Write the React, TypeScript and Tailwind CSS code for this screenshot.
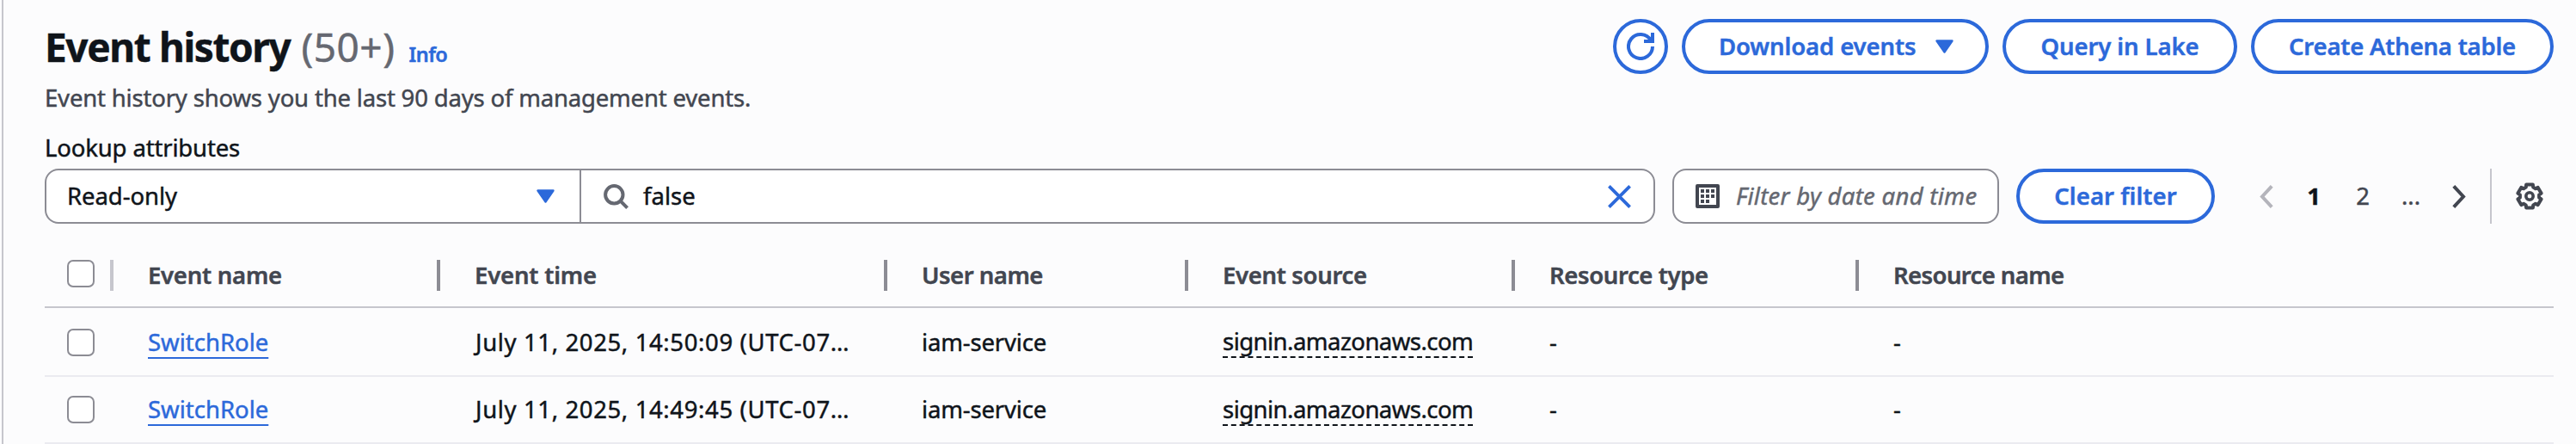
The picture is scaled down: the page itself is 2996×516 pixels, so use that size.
import type { ReactNode } from "react";

function Caret() {
  return (
    <svg width="21" height="16" viewBox="0 0 21 16" className="shrink-0 text-[#2c69da]">
      <path d="M1.5 1.5h18L10.5 14.5z" fill="currentColor" stroke="currentColor" strokeWidth="2.4" strokeLinejoin="round" />
    </svg>
  );
}

function RefreshIcon() {
  return (
    <svg width="32" height="32" viewBox="0 0 16 16" fill="none" stroke="currentColor" strokeWidth="2">
      <path d="M15 8a7 7 0 1 1-1-3.6" />
      <path d="M15 0v5h-5" />
    </svg>
  );
}

function SearchIcon() {
  return (
    <svg width="29" height="29" viewBox="0 0 29 29" fill="none" stroke="#656871" strokeWidth="4" className="shrink-0">
      <circle cx="12.3" cy="12.3" r="10.2" />
      <path d="M19.4 19.4l8.2 8.2" />
    </svg>
  );
}

function CloseIcon() {
  return (
    <svg width="27" height="27" viewBox="0 0 27 27" fill="none" stroke="#2c69da" strokeWidth="3.8" className="shrink-0">
      <path d="M1.4 1.4l24.2 24.2M25.6 1.4L1.4 25.6" />
    </svg>
  );
}

function CalendarIcon() {
  return (
    <svg width="28" height="28" viewBox="0 0 28 28" className="shrink-0">
      <rect x="2" y="2" width="24" height="24" fill="none" stroke="#424650" strokeWidth="4" strokeLinejoin="round" />
      <path d="M6 6h4v4H6zM12 6h4v4h-4zM18 6h4v4h-4zM6 12h4v4H6zM12 12h4v4h-4zM18 12h4v4h-4zM6 18h4v4H6zM12 18h4v4h-4z" fill="#424650" />
    </svg>
  );
}

function Chevron({ d, color }: { d: string; color: string }) {
  return (
    <svg width="16" height="27" viewBox="0 0 16 27" fill="none" stroke={color} strokeWidth="4" className="shrink-0">
      <path d={d} />
    </svg>
  );
}

// Six teeth, each given by its two valley points and two tip points.
function gearPath() {
  const pts: string[] = [];
  for (let i = 0; i < 6; i++) {
    for (const [offset, radius] of [[-22, 11.2], [-16, 14], [16, 14], [22, 11.2]]) {
      const a = ((i * 60 - 90 + offset) * Math.PI) / 180;
      pts.push(`${(16 + radius * Math.cos(a)).toFixed(2)} ${(16 + radius * Math.sin(a)).toFixed(2)}`);
    }
  }
  return `M${pts.join("L")}Z`;
}

function GearIcon() {
  return (
    <svg width="32" height="32" viewBox="0 0 32 32" fill="none" stroke="#424650" strokeLinejoin="round" className="shrink-0">
      <path d={gearPath()} strokeWidth="4" />
      <circle cx="16" cy="16" r="4.2" strokeWidth="3.6" />
    </svg>
  );
}

function Button({ className, children }: { className: string; children: ReactNode }) {
  return (
    <button
      className={`flex h-16 shrink-0 items-center rounded-full border-4 border-[#2c69da] bg-white font-semibold whitespace-nowrap text-[#2c69da] ${className}`}
    >
      {children}
    </button>
  );
}

function Checkbox({ className = "" }: { className?: string }) {
  return <span className={`block size-8 shrink-0 rounded-[7px] border-2 border-[#8c8c94] bg-white ${className}`} />;
}

function HeadCell({ children, className }: { children: ReactNode; className: string }) {
  return (
    <div className="flex items-center justify-between pl-10">
      <span className={`pt-[2px] ${className}`}>{children}</span>
      <span className="mt-[2px] h-9 w-1 bg-[#8c8c94]" />
    </div>
  );
}

const columns = "grid grid-cols-[80px_380px_520px_350px_380px_400px_1fr]";

const events = [
  { time: "July 11, 2025, 14:50:09 (UTC-07…", height: "h-20", box: "mt-[2px]", text: "pt-px" },
  { time: "July 11, 2025, 14:49:45 (UTC-07…", height: "h-[78px]", box: "", text: "" },
];

export default function App() {
  return (
    <div className="h-[516px] overflow-hidden bg-[#fcfcfd] pl-[2px]">
      <div className="h-full border-l-2 border-[#c6c6cd] pt-[22px] pr-[26px] pl-12 font-['Noto_Sans','Open_Sans',sans-serif] text-[27.5px] leading-10 text-[#0f141a] [-webkit-text-stroke-width:0.45px]">
        <header className="flex h-16 items-center justify-between">
          <div className="mt-[9px] flex items-baseline leading-[60px]">
            <h1 className="text-[46px] font-bold tracking-[-1.4px]">Event history</h1>
            <span className="ml-[13px] text-[46px] tracking-[0.5px] text-[#656871]">(50+)</span>
            <a className="ml-4 text-[23.5px] font-semibold tracking-[-0.5px] text-[#2c69da]">Info</a>
          </div>
          <div className="flex gap-4">
            <Button className="w-16 justify-center">
              <RefreshIcon />
            </Button>
            <Button className="w-[357px] justify-between pr-[37px] pl-[39px]">
              <span className="tracking-[-0.11px]">Download events</span>
              <Caret />
            </Button>
            <Button className="w-[273px] justify-center tracking-[-0.1px]">Query in Lake</Button>
            <Button className="w-[352px] justify-center tracking-[-0.21px]">Create Athena table</Button>
          </div>
        </header>

        <p className="mt-2 tracking-[-0.18px] text-[#424650]">
          Event history shows you the last 90 days of management events.
        </p>
        <label className="mt-[18px] block tracking-[-0.15px]">Lookup attributes</label>

        <div className="mt-1 flex h-16 items-center">
          <div className="flex h-16 w-[1873px] rounded-2xl border-2 border-[#8c8c94] bg-white">
            <div className="flex w-[622px] items-center justify-between border-r-2 border-[#8c8c94] pr-[29px] pl-6">
              <span className="tracking-[-0.07px]">Read-only</span>
              <Caret />
            </div>
            <div className="flex flex-1 items-center pr-[26px] pl-[26px]">
              <SearchIcon />
              <span className="ml-[17px] flex-1">false</span>
              <CloseIcon />
            </div>
          </div>
          <div className="ml-5 flex h-16 w-[380px] items-center rounded-2xl border-2 border-[#8c8c94] bg-white pl-[25px]">
            <CalendarIcon />
            <span className="ml-[19px] tracking-[0.29px] whitespace-nowrap text-[#656871] italic">Filter by date and time</span>
          </div>
          <Button className="ml-5 w-[231px] justify-center tracking-[0.08px]">Clear filter</Button>
          <div className="ml-[52px] flex h-16 items-center">
            <Chevron d="M14.2 1.4L3 13.5L14.2 25.6" color="#b4b4bb" />
            <span className="ml-[27px] w-10 text-center font-bold">1</span>
            <span className="ml-[17px] w-10 text-center text-[#424650]">2</span>
            <span className="ml-4 w-10 text-center text-[#424650]">...</span>
            <span className="ml-7">
              <Chevron d="M1.8 1.4L13 13.5L1.8 25.6" color="#424650" />
            </span>
            <span className="ml-7 h-16 w-[2px] bg-[#c6c6cd]" />
            <span className="ml-7">
              <GearIcon />
            </span>
          </div>
        </div>

        <div className="mt-[22px] whitespace-nowrap">
          <div className={`${columns} h-[76px] border-b-2 border-[#c6c6cd] font-semibold text-[#424650]`}>
            <div className="flex items-center justify-between pl-[26px]">
              <Checkbox className="mb-[2px]" />
              <span className="mt-[2px] h-9 w-1 bg-[#c6c6cd]" />
            </div>
            <HeadCell className="tracking-[-0.26px]">Event name</HeadCell>
            <HeadCell className="tracking-[-0.19px]">Event time</HeadCell>
            <HeadCell className="tracking-[-0.5px]">User name</HeadCell>
            <HeadCell className="tracking-[-0.33px]">Event source</HeadCell>
            <HeadCell className="tracking-[-0.39px]">Resource type</HeadCell>
            <div className="flex items-center pt-[2px] pl-10 tracking-[-0.6px]">Resource name</div>
          </div>
          {events.map((event) => (
            <div key={event.time} className={`${columns} items-center border-b-2 border-[#ebebf0] ${event.height}`}>
              <div className="pl-[26px]">
                <Checkbox className={event.box} />
              </div>
              <div className={`pl-10 ${event.text}`}>
                <a className="text-[#2c69da] underline decoration-2 underline-offset-[7px]">SwitchRole</a>
              </div>
              <div className={`pl-[41px] tracking-[0.63px] ${event.text}`}>{event.time}</div>
              <div className={`pl-10 tracking-[-0.16px] ${event.text}`}>iam-service</div>
              <div className="flex pl-10">
                <span className="mt-[2px] h-9 border-b-2 border-dashed border-[#0f141a] leading-[34px] tracking-[-0.53px]">
                  signin.amazonaws.com
                </span>
              </div>
              <div className={`pl-10 ${event.text}`}>-</div>
              <div className={`pl-10 ${event.text}`}>-</div>
            </div>
          ))}
        </div>
      </div>
    </div>
  );
}
